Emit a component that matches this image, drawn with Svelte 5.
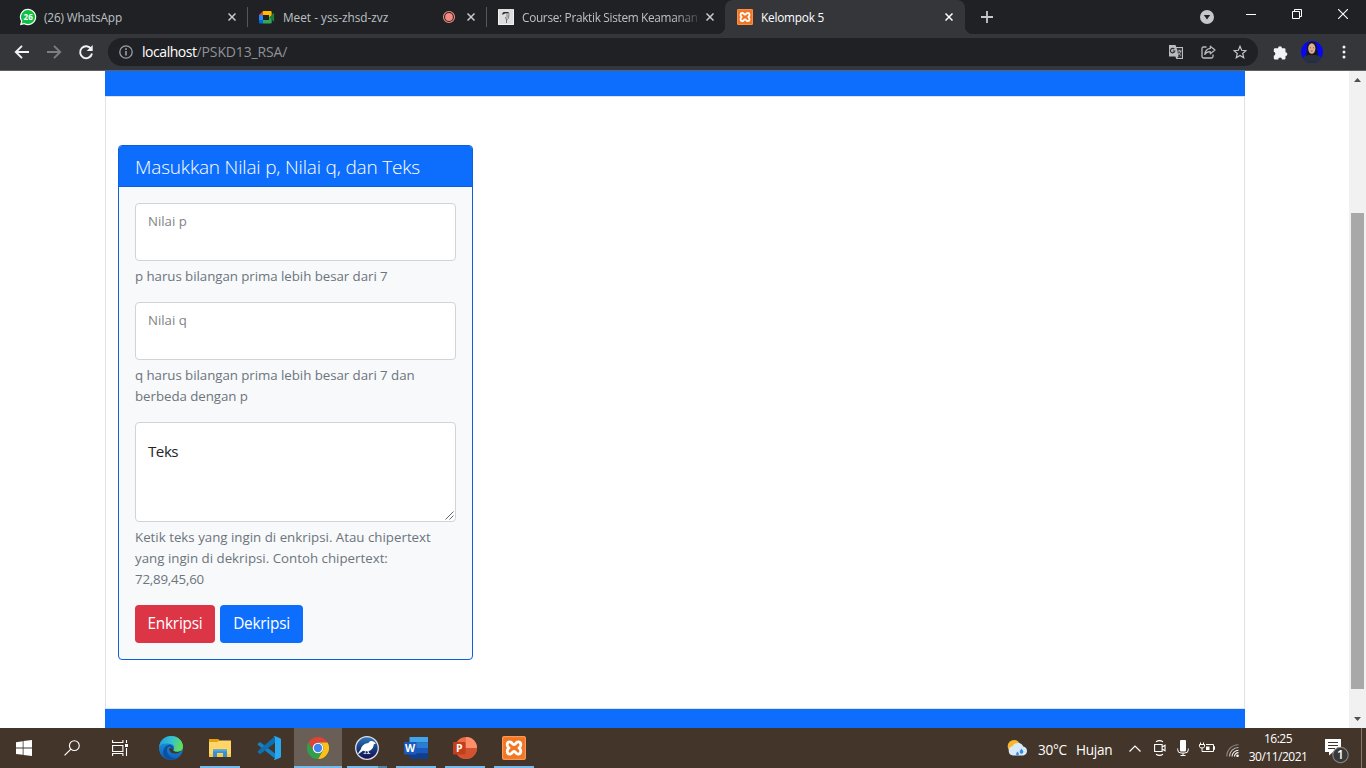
<script>
  const tabs = [
    { icon: 'whatsapp', title: '(26) WhatsApp', width: 239, fit: '-0.15px' },
    { icon: 'meet', title: 'Meet - yss-zhsd-zvz', width: 239, fit: '0px', recording: true },
    { icon: 'course', title: 'Course: Praktik Sistem Keamanan', width: 239, fit: '-0.3px', faded: true },
    { icon: 'xampp', title: 'Kelompok 5', width: 240, fit: '-0.2px', active: true }
  ];
</script>

{#snippet xampp(size)}
  <svg width={size} height={size} viewBox="0 0 24 24">
    <rect width="24" height="24" rx="2" fill="#f37623" />
    <rect x=".7" y=".7" width="22.6" height="22.6" rx="1.6" fill="none" stroke="#f9a264" stroke-width="1" />
    <path d="M8.200 6C4.800 5.600 4.200 9.700 7 11.900C4.200 14.200 4.900 18.500 8.300 18.100C10.300 17.800 10.200 15.600 12 15.500C13.800 15.600 13.700 17.800 15.700 18.100C19.100 18.500 19.800 14.200 17 11.900C19.800 9.700 19.200 5.600 15.800 6C13.700 6.200 14 8.400 12 8.500C10 8.400 10.300 6.200 8.200 6Z" fill="none" stroke="#fff" stroke-width="2.800" stroke-linejoin="round" />
  </svg>
{/snippet}

{#snippet favicon(name)}
  {#if name === 'whatsapp'}
    <svg width="18" height="18" viewBox="0 0 18 18">
      <path d="M9 .8a8.200 8.200 0 1 1-3.900 15.400L1 17.300l1.100-4A8.200 8.200 0 0 1 9 .8Z" fill="#fff" />
      <path d="M9 2a7 7 0 1 1-3.700 12.900L2.700 15.600l.7-2.500A7 7 0 0 1 9 2Z" fill="#0fc143" />
      <text x="9.200" y="12" text-anchor="middle" class="count">26</text>
    </svg>
  {:else if name === 'meet'}
    <svg width="18" height="18" viewBox="0 0 18 18">
      <path d="M5 3v4H1Z" fill="#ea4335" />
      <path d="M5 3h7.500q1.200 0 1.200 1.200V8l-2.700 1.500V7H5Z" fill="#ffba00" />
      <path d="M1 7h4v5H1Z" fill="#2684fc" />
      <path d="M1 12h4v3.500H2.200Q1 15.500 1 14.300Z" fill="#0066da" />
      <path d="M5 12h6V9l2.700-1v6.300q0 1.200-1.200 1.200H5Z" fill="#34a853" />
      <path d="m11.500 9.200 3.800-4q.8-.5.800.5v7.200q0 1-.8.400Z" fill="#188038" />
    </svg>
  {:else if name === 'course'}
    <svg width="16" height="16" viewBox="0 0 16 16">
      <rect width="16" height="16" rx="1" fill="#dedede" />
      <path d="M4 5 5.500 3H10l1.500 1.200L9 4.500 7.500 4.200 4.500 5.800Z" fill="#2c2c2c" />
      <path d="m8.500 4.500 2.200 1.700-.4 2.300-1.500.5-.8-2Z" fill="#aaa" />
      <path d="m7.500 8 1 3v3" fill="none" stroke="#555" stroke-width=".8" />
      <path d="m11 4.500-.5 4.500-1.500 2" fill="none" stroke="#666" stroke-width=".7" />
      <path d="M.5.5v15h15V.5" fill="none" stroke="#f2f2f2" />
    </svg>
  {:else}
    {@render xampp(16)}
  {/if}
{/snippet}

<div class="screen">
  <header class="tabstrip">
    {#each tabs as tab, i}
      <div class="tab" class:active={tab.active} class:divided={i < 2} style:width="{tab.width}px">
        <span class="fav">{@render favicon(tab.icon)}</span>
        <span class="title" class:faded={tab.faded} style:letter-spacing={tab.fit}>{tab.title}</span>
        {#if tab.recording}
          <svg class="rec" width="14" height="14" viewBox="0 0 14 14">
            <circle cx="7" cy="7" r="5.500" fill="none" stroke="#f28b82" stroke-width="1.100" />
            <circle cx="7" cy="7" r="3.900" fill="#f28b82" />
          </svg>
        {/if}
        <svg class="close" width="8" height="8" viewBox="0 0 8 8"><path d="m.5.500 7 7m0-7-7 7" /></svg>
      </div>
    {/each}
    <svg class="newtab" width="12" height="12" viewBox="0 0 12 12"><path d="M6 0v12M0 6h12" stroke="#c6c7ca" stroke-width="1.800" /></svg>
    <div class="window">
      <svg width="14" height="14" viewBox="0 0 14 14"><circle cx="7" cy="7" r="7" fill="#c6c7ca" /><path d="M3.800 5h6.400L7 9.500Z" fill="#202124" /></svg>
      <svg width="10" height="10" viewBox="0 0 10 10"><path d="M0 5.500h10" stroke="#fff" /></svg>
      <svg width="10" height="10" viewBox="0 0 10 10"><path d="M.5 2.500h7v7h-7ZM2.500 2.500v-2h7v7h-2" fill="none" stroke="#fff" /></svg>
      <svg width="10" height="10" viewBox="0 0 10 10"><path d="m0 0 10 10M10 0 0 10" stroke="#fff" stroke-width="1.100" /></svg>
    </div>
  </header>

  <div class="toolbar">
    <svg class="nav" width="16" height="16" viewBox="0 0 16 16"><path d="M15 8H2.500M8 1.800 1.800 8 8 14.200" stroke="#f1f3f4" /></svg>
    <svg class="nav" width="16" height="16" viewBox="0 0 16 16"><path d="M1 8h12.500M8 1.800 14.200 8 8 14.200" stroke="#7d7e81" /></svg>
    <svg class="nav" width="16" height="16" viewBox="0 0 16 16"><path d="M13.200 5A6 6 0 1 0 14 9.500" stroke="#f1f3f4" /><path d="M14.700 1v6H8.700Z" fill="#f1f3f4" stroke="none" /></svg>
    <div class="omnibox">
      <svg width="14" height="14" viewBox="0 0 14 14"><circle cx="7" cy="7" r="6.200" fill="none" stroke="#9aa0a6" stroke-width="1.300" /><path d="M7 6v4.500M7 3.300v1.600" stroke="#9aa0a6" stroke-width="1.600" /></svg>
      <span class="url"><b>localhost</b>/PSKD13_RSA/</span>
      <svg width="14" height="14" viewBox="0 0 14 14">
        <path d="M0 0h6.500l.8 2H14v12H7.200l-.8-2.500H0Z" fill="#babcbe" />
        <path d="M7.600 3h5.400v10H8.300l1.200-1.700Z" fill="#35363a" />
        <path d="M5.300 4.200A2.200 2.200 0 1 0 5.800 6H3.800" fill="none" stroke="#303134" stroke-width="1.200" />
        <path d="M8.300 6h4.300M10.300 4.900V6M11.700 6c-.4 2-1.700 3.300-3 4.100M9.200 7.500c.6 1.200 1.700 2.200 2.900 3" fill="none" stroke="#babcbe" stroke-width=".9" />
      </svg>
      <svg width="15" height="14" viewBox="0 0 15 14">
        <path d="M5.500 2H2.500Q1 2 1 3.500v8Q1 13 2.500 13h8q1.500 0 1.500-1.500V9.500" fill="none" stroke="#babcbe" stroke-width="1.300" />
        <path d="M9.300 1.200 14 5 9.300 8.800V6.600C6.600 6.500 5 7.400 3.800 9.400 4.100 6 6 3.800 9.300 3.400Z" fill="none" stroke="#babcbe" stroke-width="1.200" stroke-linejoin="round" />
      </svg>
      <svg width="14" height="14" viewBox="0 0 14 14"><path d="m7 1.300 1.650 4 4.300.35-3.250 2.800 1 4.200L7 10.400l-3.700 2.250 1-4.200-3.250-2.800 4.300-.35Z" fill="none" stroke="#c4c6c8" stroke-width="1.200" /></svg>
    </div>
    <svg class="ext" width="15" height="15" viewBox="0 0 15 15"><path d="M5 3.300a2 2 0 1 1 4 0h2.300q1.200 0 1.200 1.200v2.700a1.850 1.850 0 1 1 0 3.700v2.400q0 1.200-1.200 1.200H9a1.900 1.900 0 0 0-3.800 0H2Q.8 14.500.8 13.300v-2.600a2 2 0 0 0 0-3.900V4.500Q.8 3.300 2 3.300Z" fill="#f1f3f4" /></svg>
    <svg class="avatar" width="22" height="22" viewBox="0 0 22 22">
      <defs><clipPath id="round"><circle cx="11" cy="11" r="11" /></clipPath></defs>
      <g clip-path="url(#round)">
        <rect width="22" height="22" fill="#0808f0" />
        <path d="M11 .5C6.500.500 6 5 6 9l-1 6h12l-1-6C16 5 15.500.500 11 .5Z" fill="#171717" />
        <path d="M0 18c3-3 5-3.500 7-4h8c3 .5 5 2 7 4v4H0Z" fill="#27303c" />
        <ellipse cx="10.800" cy="7.500" rx="3.600" ry="5.200" fill="#dcae92" />
        <path d="M9 6.800h1M12 6.800h1M9.700 10h2" stroke="#7c4133" stroke-width=".8" />
      </g>
    </svg>
    <svg width="4" height="14" viewBox="0 0 4 14"><g fill="#f1f3f4"><circle cx="2" cy="2" r="1.500" /><circle cx="2" cy="7" r="1.500" /><circle cx="2" cy="12" r="1.500" /></g></svg>
  </div>

  <main class="page">
    <div class="container">
      <div class="band top"></div>
      <div class="content">
        <section class="card">
          <h5>Masukkan Nilai p, Nilai q, dan Teks</h5>
          <div class="body">
            <div class="field">Nilai p</div>
            <p class="help">p harus bilangan prima lebih besar dari 7</p>
            <div class="field">Nilai q</div>
            <p class="help">q harus bilangan prima lebih besar dari 7 dan<br />berbeda dengan p</p>
            <div class="area">
              <span>Teks</span>
              <svg width="9" height="9" viewBox="0 0 9 9"><path d="M.5 8.500l8-8M4.500 8.500l4-4" stroke="#555" stroke-width=".9" /></svg>
            </div>
            <p class="help loose">Ketik teks yang ingin di enkripsi. Atau chipertext<br />yang ingin di dekripsi. Contoh chipertext:<br /><span class="sample">72,89,45,60</span></p>
            <div class="buttons">
              <button class="danger">Enkripsi</button>
              <button class="primary">Dekripsi</button>
            </div>
          </div>
        </section>
      </div>
      <div class="band bottom"></div>
    </div>
    <div class="scroll">
      <svg width="17" height="17" viewBox="0 0 17 17"><path d="M5 11h7L8.500 7Z" fill="#505050" /></svg>
      <div class="track"><div class="thumb"></div></div>
      <svg width="17" height="17" viewBox="0 0 17 17"><path d="M5 6h7l-3.500 4Z" fill="#505050" /></svg>
    </div>
  </main>

  <footer class="taskbar">
    <div class="task">
      <svg width="16" height="16" viewBox="0 0 16 16"><path d="M0 2.200 6.700 1.200v6.300H0ZM7.500 1.100 16 0v7.500H7.500ZM0 8.400h6.700v6.400L0 13.900ZM7.500 8.400H16V16l-8.500-1.100Z" fill="#fff" /></svg>
    </div>
    <div class="task">
      <svg width="16" height="16" viewBox="0 0 17 17"><circle cx="11" cy="6" r="5.200" fill="none" stroke="#fff" stroke-width="1.200" /><path d="M7.300 9.700.6 16.400" stroke="#fff" stroke-width="1.300" /></svg>
    </div>
    <div class="task">
      <svg width="17" height="16" viewBox="0 0 17 16"><path d="M.6 0v2.500h10.300V0M.6 5.500h10.300v6H.6ZM.6 16v-2.500h10.300V16M14.500 0v3M14.500 8v8" fill="none" stroke="#fff" stroke-width="1.100" /><path d="M13 4h3v3h-3Z" fill="#fff" /></svg>
    </div>
    <div class="task wide">
      <svg width="24" height="24" viewBox="0 0 24 24">
        <defs>
          <linearGradient id="eg" x1="0" y1=".3" x2="1" y2=".5"><stop offset="0" stop-color="#259fdb" /><stop offset=".5" stop-color="#35c1cf" /><stop offset="1" stop-color="#66e04e" /></linearGradient>
          <linearGradient id="eb" x1="0" y1="0" x2="0" y2="1"><stop offset="0" stop-color="#1b9de2" /><stop offset="1" stop-color="#1160b8" /></linearGradient>
        </defs>
        <circle cx="12" cy="12" r="12" fill="url(#eb)" />
        <path d="M.1 11C1 4.500 6 0 12.200 0 19 0 24 5 24 10.500c0 3.500-2.700 5.500-5.600 5.500-2.700 0-4.400-1-4-2 2-2.800 0-6.300-4-6.300C5.500 7 1.500 8 .1 11Z" fill="url(#eg)" />
        <path d="M8.500 12C6.500 17.500 11 22 17 22.700 10 26 2.500 21 4.300 14.500 5 11.500 7.300 9.400 9.800 8.800 13 8.200 15.500 11.300 14.300 14 12 10.500 9.300 10 8.500 12Z" fill="#0c51a0" />
        <path d="M10 13.500C10.500 11.500 12.500 11.500 14.200 14c.3 2 4.500 2.700 8.300.5-2 3.500-10.500 5-12.500-1Z" fill="#43352a" />
      </svg>
    </div>
    <div class="task open">
      <svg width="22" height="20" viewBox="0 0 22 20"><path d="M0 1h9l1 1.500H22V19H0Z" fill="#ffd567" /><path d="M0 1h9l1 1.500L8.500 4H0Z" fill="#e8a20b" /><path d="M0 16h22v3H0Z" fill="#f8c84e" /><path d="M4 11.500h14V19h-4v-4H8v4H4Z" fill="#368fd0" /><path d="M4 11.500h14v2H4Z" fill="#4da6e0" /></svg>
    </div>
    <div class="task">
      <svg width="24" height="24" viewBox="0 0 24 24"><path d="m1 7.500 2-1.600L18 17.500v5L.9 9Q.2 8.200 1 7.500Z" fill="#1681c4" /><path d="m.9 15 17-14.800V6.700L3.100 18.200 1 16.600Q.2 15.800.9 15Z" fill="#0d70b0" /><path d="m17.700 0 5.500 2.200.8 1V20.800l-.8 1L17.700 24l-1-.6q1.300-.2 1.300-1.700V2.300Q18 .8 16.700.6Z" fill="#29a9f2" /></svg>
    </div>
    <div class="task current">
      <svg width="22" height="22" viewBox="0 0 22 22">
        <path d="M1.470 5.500A11 11 0 0 1 20.530 5.500H11A5.500 5.500 0 0 0 6.240 13.750Z" fill="#e04236" />
        <path d="M20.530 5.500A11 11 0 0 1 11 22L15.760 13.750A5.500 5.500 0 0 0 11 5.500Z" fill="#fbc116" />
        <path d="M11 22A11 11 0 0 1 1.470 5.500L6.240 13.750A5.500 5.500 0 0 0 15.760 13.750Z" fill="#30a04b" />
        <circle cx="11" cy="11" r="5.300" fill="#fff" /><circle cx="11" cy="11" r="4.200" fill="#4285ee" />
      </svg>
    </div>
    <div class="task open stacked">
      <svg width="24" height="24" viewBox="0 0 24 24">
        <defs><linearGradient id="wb" x1="0" y1="0" x2="0" y2="1"><stop offset="0" stop-color="#3179bc" /><stop offset=".55" stop-color="#183a80" /><stop offset="1" stop-color="#15104d" /></linearGradient></defs>
        <circle cx="12" cy="12" r="11.300" fill="url(#wb)" stroke="#dcdfe5" stroke-width="1.300" />
        <path d="m3 17.500 3-4.500C7 9 10 7.500 13.500 7c.8-2 3.800-2.500 5.300-1.200L21 7.200l-2.200 1C18.500 12.500 15.800 14.500 13.500 15l.5 2h1.300v.8H12v-.8h1l-.6-1.800-1.700-.2L10.500 17h1v.8H8.700v-.8h1l.2-2L8 14.700 3.500 17.900Z" fill="#fff" />
      </svg>
    </div>
    <div class="task open">
      <svg width="24" height="22" viewBox="0 0 24 22"><path d="M5.500 0H24v5.500H5.500Z" fill="#41a5ee" /><path d="M5.500 5.500H24V11H5.500Z" fill="#2b7cd3" /><path d="M5.500 11H24v5.500H5.500Z" fill="#185abd" /><path d="M5.500 16.500H24V22H5.500Z" fill="#103f91" /><rect y="5" width="12.500" height="12.500" rx="1" fill="#185abd" /><text x="6.200" y="14.800" text-anchor="middle" class="office">W</text></svg>
    </div>
    <div class="task open">
      <svg width="24" height="22" viewBox="0 0 24 22"><circle cx="13" cy="11" r="11" fill="#ed6c47" /><path d="M13 0a11 11 0 0 1 11 11H13Z" fill="#ff8f6b" /><path d="M2 11h22a11 11 0 0 1-22 0Z" fill="#d35230" /><rect y="5" width="12.500" height="12.500" rx="1" fill="#c43e1c" /><text x="6.200" y="14.800" text-anchor="middle" class="office">P</text></svg>
    </div>
    <div class="task open">{@render xampp(24)}</div>

    <div class="tray">
      <svg class="weather" width="22" height="18" viewBox="0 0 22 18">
        <circle cx="7" cy="7.200" r="6.300" fill="#f8b62d" />
        <path d="M6 16.500a4.700 4.700 0 0 1-.5-9.300Q7.500 3.800 11 4a5.300 5.300 0 0 1 5.200 3.500 4.600 4.600 0 0 1 .3 9Z" fill="#d8e9fa" />
        <path d="M10.500 12.500q1.400 1.600 1.400 2.600a1.400 1.400 0 0 1-2.800 0q0-1 1.400-2.600ZM14.500 9.500q1.800 2.300 1.800 3.500a1.800 1.800 0 0 1-3.600 0q0-1.200 1.800-3.500Z" fill="#2e8de5" />
      </svg>
      <span class="temp">30°C</span><span class="rain">Hujan</span>
      <svg class="chev" width="12" height="7" viewBox="0 0 12 7"><path d="m.5 6.500 5.500-5.500 5.500 5.500" fill="none" stroke="#fff" stroke-width="1.200" /></svg>
      <svg class="cam" width="12" height="16" viewBox="0 0 12 16"><path d="M.6 4.500h7.500v7H.6ZM8.100 7l2.900-1.800v5.600L8.100 9M2 1.800Q5.500-.5 9 1.800M2 14.200q3.500 2.300 7 0" fill="none" stroke="#fff" stroke-width="1.100" /></svg>
      <svg class="mic" width="12" height="16" viewBox="0 0 12 16"><rect x="3" width="6" height="11.500" rx="1" fill="#fff" /><path d="M.7 8.500v1.300q0 3.200 3.300 3.200h4q3.300 0 3.300-3.200V8.500M6 13v2.500M3.500 15.500h5" fill="none" stroke="#fff" /></svg>
      <svg class="bat" width="16" height="12" viewBox="0 0 16 12"><path d="M7 2.500h7.500v7H5M14.500 4.500h1v3h-1M1.500.5v2M4.500.5v2M.5 2.500h5v2q0 1.500-2.500 1.500Q.5 6 .5 4.500ZM3 6v3.500h2" fill="none" stroke="#fff" /><path d="M7 4.500h3.500v3.500H7Z" fill="#fff" /></svg>
      <svg class="wifi" width="13" height="13" viewBox="0 0 13 13"><g fill="none" stroke-width="1.100"><path d="M.8 12.500A11.500 11.500 0 0 1 12.500.8" stroke="#8d8681" /><path d="M3.500 12.500a9 9 0 0 1 9-9" stroke="#c0bbb7" /><path d="M6 12.500a6.500 6.500 0 0 1 6.500-6.300" stroke="#eee" /><path d="M8.500 12.500a4 4 0 0 1 4-3.900" stroke="#fff" /></g><circle cx="11.500" cy="11.700" r="1.300" fill="#fff" /></svg>
      <div class="clock"><span>16:25</span><span class="date">30/11/2021</span></div>
      <svg class="note" width="25" height="25" viewBox="0 0 25 25"><path d="M0 0h16v13H8l-4 3.500V13H0Z" fill="#fff" /><path d="M3 3.500h10M3 6.500h10M3 9.500h7" stroke="#43352a" /><circle cx="15.500" cy="16" r="7.700" fill="#383838" stroke="#8a8a8a" stroke-width="1.100" /><text x="15.500" y="20" text-anchor="middle" class="badge">1</text></svg>
      <i class="peek"></i>
    </div>
  </footer>
</div>

<style>
  :global(body) { margin: 0; overflow: hidden; }
  * { box-sizing: border-box; }
  svg { display: block; flex: none; }
  .screen { width: 1366px; height: 768px; display: flex; flex-direction: column; font-family: "Open Sans", "Noto Sans", sans-serif; background: #fff; overflow: hidden; }

  .tabstrip { height: 34px; background: #202124; display: flex; padding-left: 8px; flex: none; }
  .tab { height: 34px; display: flex; align-items: center; padding: 0 11px; color: #bdc1c6; font-size: 11.8px; position: relative; white-space: nowrap; }
  .tab.divided::after { content: ""; position: absolute; right: -1px; top: 7px; width: 1px; height: 20px; background: #55565a; }
  .fav { width: 18px; display: flex; justify-content: center; margin-right: 7px; }
  .title { flex: 1; min-width: 0; line-height: 18px; }
  .faded { margin-right: 7px; -webkit-mask-image: linear-gradient(90deg, #000 86%, rgba(0,0,0,.15)); mask-image: linear-gradient(90deg, #000 86%, rgba(0,0,0,.15)); }
  .rec { margin-right: 11px; }
  .close path { stroke: #c8cacd; stroke-width: 1.5; }
  .active { background: #35363a; border-radius: 8px 8px 0 0; color: #fff; padding-right: 12px; }
  .active .close path { stroke: #fff; }
  .active::before { content: ""; position: absolute; left: -8px; right: -8px; bottom: 0; height: 8px; background: radial-gradient(circle at 0 0, transparent 8px, #35363a 8.5px) left / 8px 8px no-repeat, radial-gradient(circle at 100% 0, transparent 8px, #35363a 8.5px) right / 8px 8px no-repeat; }
  .newtab { margin: 11px 0 0 16px; }
  .window { margin-left: auto; display: flex; gap: 36px; padding: 9px 18px 0 0; }
  .window svg:first-child { margin: 1px -4px 0 0; }
  .count { font: 700 8px "Open Sans", sans-serif; fill: #fff; }

  .toolbar { height: 37px; background: #35363a; border-bottom: 1px solid #606164; display: flex; align-items: center; padding: 0 20px 0 14px; flex: none; }
  .nav { fill: none; stroke-width: 1.9; margin-right: 16px; }
  .nav:nth-child(3) { margin-right: 14px; }
  .omnibox { width: 1150px; height: 28px; border-radius: 14px; background: #202124; display: flex; align-items: center; padding: 0 11px; }
  .url { flex: 1; margin-left: 9px; color: #8f9397; font-size: 14px; line-height: 20px; letter-spacing: -0.15px; }
  .url b { color: #fff; font-weight: 400; letter-spacing: -0.45px; }
  .omnibox svg + svg { margin-left: 17.5px; }
  .ext { margin: 0 13px 0 15px; }
  .avatar { margin-right: 19px; }

  .page { height: 657px; display: flex; flex: none; }
  .container { width: 1140px; margin-left: 105px; display: flex; flex-direction: column; }
  .band { background: #0d6efd; }
  .top { height: 25px; }
  .bottom { height: 19px; }
  .content { height: 613px; border: 1px solid #dee2e6; padding: 48px 12px; }
  .card { width: 355px; height: 515px; border: 1px solid #0c60d9; border-radius: 4px; overflow: hidden; background: #f8f9fa; }
  h5 { margin: 0; height: 41px; padding: 9px 15px 7px 16px; background: #0d6efd; border-bottom: 1px solid #0c60d9; color: #fff; font-size: 19px; line-height: 24px; font-weight: 300; letter-spacing: -0.17px; white-space: nowrap; }
  .body { padding: 16px; }
  .field { height: 58px; border: 1px solid #ced4da; border-radius: 4px; background: #fff; padding: 7px 12px; font-size: 13.2px; line-height: 20px; color: #808386; }
  .help { margin: 5px 0 15px; color: #6c757d; font-size: 13.3px; line-height: 21px; white-space: nowrap; letter-spacing: -0.05px; }
  .help.loose { letter-spacing: 0; }
  .sample { letter-spacing: -0.2px; }
  .area { height: 100px; border: 1px solid #ced4da; border-radius: 4px; background: #fff; padding: 16px 1px 1px 12px; color: #212529; font-size: 15.2px; line-height: 24px; letter-spacing: -0.5px; display: flex; justify-content: space-between; }
  .area svg { align-self: flex-end; }
  .buttons { display: flex; gap: 5px; }
  button { border: 0; border-radius: 4px; height: 38px; padding: 0; color: #fff; font: 400 15.4px/24px "Open Sans", sans-serif; letter-spacing: -0.25px; }
  .danger { background: #dc3545; width: 80px; }
  .primary { background: #0d6efd; width: 83px; }
  .scroll { width: 17px; margin-left: auto; background: #f1f1f1; display: flex; flex-direction: column; }
  .track { flex: 1; padding: 125px 2px 0; }
  .thumb { height: 476px; background: #a8a8a8; }

  .taskbar { height: 40px; background: #43352a; display: flex; flex: none; color: #fff; }
  .task { width: 48px; margin-right: 1px; height: 40px; display: flex; align-items: center; justify-content: center; position: relative; }
  .task:nth-child(-n+3) { width: 48px; margin: 0; }
  .task.wide { margin-left: 3px; }
  .open::after, .current::after { content: ""; position: absolute; left: 4px; right: 4px; bottom: 0; height: 2px; background: #76b9ed; }
  .current { background: #6a5f56; }
  .current::after { left: 0; right: 0; }
  .stacked::after { background: linear-gradient(90deg, #76b9ed 31px, #5583a6 31px); }
  .office { font: 700 10.5px "Open Sans", sans-serif; fill: #fff; }
  .tray { margin-left: auto; display: flex; align-items: center; white-space: nowrap; }
  .temp, .rain { font-size: 13.6px; letter-spacing: -0.3px; }
  .temp { width: 29px; margin: 2px 9px 0; }
  .rain { width: 37px; margin-top: 2px; }
  .chev { margin-left: 16px; }
  .cam { margin-left: 13px; }
  .mic { margin-left: 11px; }
  .bat { margin-left: 10px; }
  .wifi { margin: 4px 0 0 11px; }
  .clock { width: 58px; margin-left: 10px; display: flex; flex-direction: column; align-items: center; font-size: 12px; line-height: 18px; letter-spacing: -0.5px; }
  .date { letter-spacing: -0.5px; }
  .note { margin: 6px 0 0 18px; }
  .peek { width: 1px; height: 40px; background: #85796f; margin: 0 4px 0 11px; }
  .badge { font: 600 12px "Open Sans", sans-serif; fill: #fff; }
</style>
